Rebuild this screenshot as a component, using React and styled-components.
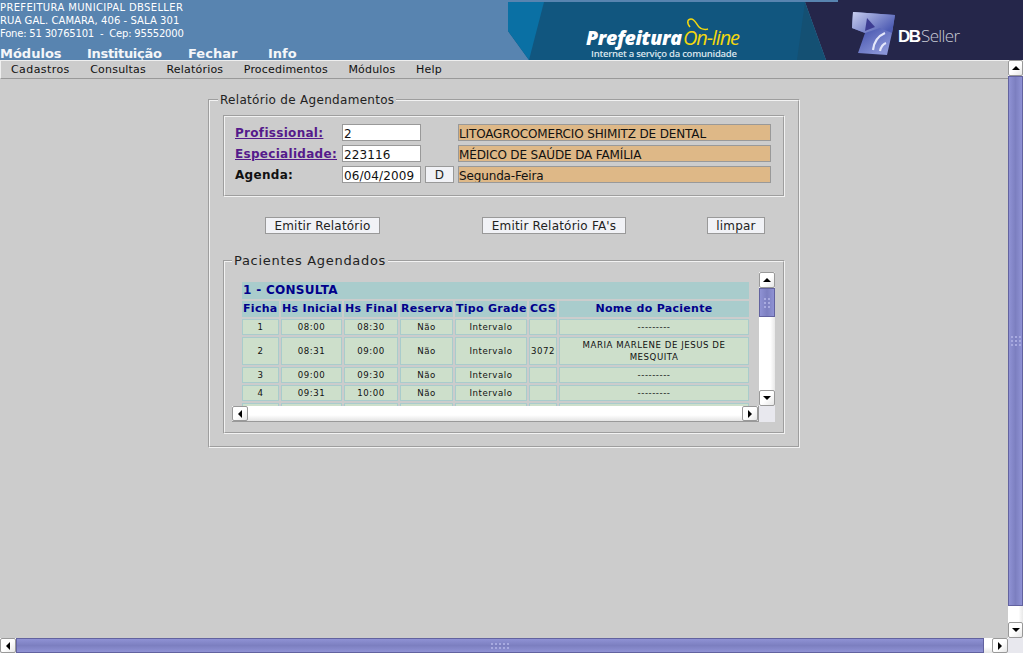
import styled, { createGlobalStyle } from "styled-components";

const GlobalStyle = createGlobalStyle`
  html, body { margin: 0; padding: 0; height: 100%; overflow: hidden; }
  body { background: #cccccc; font-family: "DejaVu Sans", Verdana, sans-serif; color: #000; }
`;

const MENU = ["Cadastros", "Consultas", "Relatórios", "Procedimentos", "Módulos", "Help"];
const NAV = ["Módulos", "Instituição", "Fechar", "Info"];
const COLS = [37, 61, 54, 53, 72, 28, 190];
const HEAD = ["Ficha", "Hs Inicial", "Hs Final", "Reserva", "Tipo Grade", "CGS", "Nome do Paciente"];
const ROWS = [
  ["1", "08:00", "08:30", "Não", "Intervalo", "", "---------"],
  ["2", "08:31", "09:00", "Não", "Intervalo", "3072", "MARIA MARLENE DE JESUS DE MESQUITA"],
  ["3", "09:00", "09:30", "Não", "Intervalo", "", "---------"],
  ["4", "09:31", "10:00", "Não", "Intervalo", "", "---------"],
  ["5", "", "", "", "", "", ""],
];

const Page = styled.div`
  height: 653px;
  width: 1023px;
  display: flex;
  flex-direction: column;
  overflow: hidden;
`;

const Header = styled.header`
  height: 60px;
  flex: none;
  background: #5884b0;
  display: flex;
  justify-content: space-between;
  overflow: hidden;
`;

const Brand = styled.div`
  color: #fff;
  padding-top: 1px;
`;

const AddressLine = styled.div`
  font-size: 10px;
  line-height: 13px;
  white-space: pre;
  letter-spacing: ${(p) => p.$spacing}px;
`;

const Nav = styled.nav`
  display: grid;
  grid-template-columns: 87px 101px 80px auto;
  margin-top: 6px;
  font-size: 13px;
  font-weight: 700;
  line-height: 16px;
  color: #f4f6f9;

  span:nth-child(2) {
    letter-spacing: -0.3px;
  }
`;

const Banner = styled.svg`
  width: 515px;
  height: 60px;
  flex: none;
  display: block;
`;

const Content = styled.div`
  flex: 1;
  display: flex;
  min-height: 0;
`;

const Main = styled.main`
  flex: 1;
  min-width: 0;
  display: flex;
  flex-direction: column;
`;

const MenuBar = styled.div`
  height: 17px;
  flex: none;
  display: flex;
  align-items: center;
  gap: 20.5px;
  padding-left: 10px;
  border-top: 1px solid #efefef;
  border-left: 1px solid #efefef;
  border-bottom: 1px solid #999;
  box-sizing: content-box;
  font-size: 11px;
  letter-spacing: 0.2px;
  color: #111;

  span:first-child {
    letter-spacing: 0.42px;
  }
`;

const Outer = styled.fieldset`
  margin: 14px 0 0 208px;
  padding: 0 13px;
  width: 592px;
  height: 355px;
  box-sizing: border-box;
  border: 2px groove #f2f2f2;
`;

const Legend = styled.legend`
  margin-left: ${(p) => p.$indent}px;
  padding: 0 2px;
  font-size: ${(p) => (p.$loose ? 13 : 12)}px;
  line-height: 14px;
  letter-spacing: ${(p) => (p.$loose ? 0.7 : 0.3)}px;
  color: #222;
`;

const FilterBox = styled.div`
  margin-top: 8px;
  width: 562px;
  height: 82px;
  box-sizing: border-box;
  padding: 7px 11px 0 10px;
  border: 2px groove #f2f2f2;
  display: grid;
  grid-template-columns: 107px 79px 4px 29px 4px 313px;
  grid-auto-rows: 17px;
  row-gap: 4px;
  align-items: center;
`;

const FieldLink = styled.a`
  font-size: 12px;
  font-weight: 700;
  letter-spacing: 0.3px;
  color: #551a8b;
  text-decoration: underline;
  white-space: nowrap;
`;

const FieldLabel = styled.span`
  font-size: 12px;
  font-weight: 700;
  letter-spacing: 0.3px;
  color: #111;
`;

const TextInput = styled.div`
  height: 17px;
  box-sizing: border-box;
  border: 1px solid #999;
  background: #fff;
  font-size: 12px;
  line-height: 16px;
  padding: 1px 0 0 1px;
  color: #111;
  letter-spacing: 0.1px;
  white-space: nowrap;
  overflow: hidden;
`;

const ReadOnlyInput = styled(TextInput)`
  grid-column: 6;
  background: #deb887;
  padding-left: 0;
  letter-spacing: -0.14px;
`;

const Button = styled.button`
  height: 17px;
  padding: 2px 0 0;
  width: ${(p) => p.$width}px;
  box-sizing: border-box;
  border: 1px solid #999;
  border-radius: 0;
  background: #f1f2f6;
  font-family: inherit;
  font-size: 12px;
  line-height: 13px;
  letter-spacing: 0.2px;
  color: #222;
`;

const DateButton = styled(Button)`
  grid-column: 4;
`;

const Actions = styled.div`
  margin: 20px 0 0 42px;
  display: flex;
`;

const ActionGap = styled.div`
  width: ${(p) => p.$width}px;
  flex: none;
`;

const ListBox = styled.fieldset`
  margin: 20px 0 0 0;
  padding: 0;
  width: 562px;
  height: 180px;
  box-sizing: border-box;
  border: 2px groove #f2f2f2;
`;

const Scroller = styled.div`
  margin: 4px 0 0 7px;
  width: 543px;
  height: 150px;
  display: grid;
  grid-template-columns: 527px 16px;
  grid-template-rows: 134px 16px;
`;

const Viewport = styled.div`
  overflow: hidden;
  padding: 10px 0 0 10px;
`;

const Grid = styled.table`
  border-collapse: separate;
  border-spacing: 2px;
  margin: -2px;
  table-layout: fixed;
  width: 511px;
`;

const SectionCell = styled.td`
  height: 17px;
  padding: 0 0 0 1px;
  background: #a9cccc;
  color: #00008b;
  font-size: 12px;
  font-weight: 700;
  letter-spacing: 0.3px;
  line-height: 17px;
`;

const HeadCell = styled.th`
  height: 16px;
  padding: 0;
  background: #a9cccc;
  color: #00008b;
  font-size: 11px;
  font-weight: 700;
  letter-spacing: 0.3px;
  line-height: 16px;
  white-space: nowrap;
  text-align: ${(p) => (p.$wide ? "center" : "left")};
  padding-left: ${(p) => (p.$wide ? 0 : 1)}px;
`;

const DataCell = styled.td`
  height: ${(p) => (p.$tall ? 26 : 14)}px;
  padding: 0 ${(p) => (p.$tight ? 0 : 8)}px;
  box-sizing: content-box;
  background: #cddfcb;
  border: 1px solid #a9cccc;
  color: #111;
  font-size: 8.6px;
  letter-spacing: 0.55px;
  line-height: 12px;
  text-align: center;
`;

const Track = styled.div`
  display: flex;
  flex-direction: ${(p) => (p.$vertical ? "column" : "row")};
  background: ${(p) =>
    p.$vertical
      ? "linear-gradient(90deg, #fff 70%, #e8e8e8)"
      : "linear-gradient(180deg, #fff 60%, #e4e4e4)"};
  box-sizing: border-box;
`;

const ArrowButton = styled.div`
  flex: none;
  width: ${(p) => p.$w}px;
  height: ${(p) => p.$h}px;
  box-sizing: border-box;
  display: flex;
  align-items: center;
  justify-content: center;
  background: linear-gradient(135deg, #fff 50%, #e6e6e6);
  border: 1px solid #999;
  border-radius: 2px;
`;

const Arrow = styled.span`
  width: 0;
  height: 0;
  border-style: solid;
  border-color: transparent;
  ${(p) => p.$dir === "up" && "border-width: 0 4px 4px 4px; border-bottom-color: #000;"}
  ${(p) => p.$dir === "down" && "border-width: 4px 4px 0 4px; border-top-color: #000;"}
  ${(p) => p.$dir === "left" && "border-width: 4px 4px 4px 0; border-right-color: #000;"}
  ${(p) => p.$dir === "right" && "border-width: 4px 0 4px 4px; border-left-color: #000;"}
`;

const Thumb = styled.div`
  flex: none;
  box-sizing: border-box;
  border: 1px solid #62629f;
  display: flex;
  align-items: center;
  justify-content: center;
  background: ${(p) =>
    p.$vertical
      ? "linear-gradient(90deg, #8f92d4, #7c7fc0 50%, #8f92d4)"
      : "linear-gradient(180deg, #8f92d4, #7c7fc0 50%, #8f92d4)"};
  ${(p) => (p.$vertical ? `height: ${p.$size}px;` : `width: ${p.$size}px;`)}
`;

const Grip = styled.div`
  display: grid;
  grid-template-columns: repeat(${(p) => p.$cols}, 2px);
  gap: 2px;
`;

const Dot = styled.i`
  width: 2px;
  height: 2px;
  background: #a8aae0;
`;

const Corner = styled.div`
  background: #e8e8ee;
`;

const TrackFill = styled.div`
  flex: 1;
`;

const ScrollBar = ({ vertical, size, cols, thickness, className }) => {
  const button = vertical ? { $w: thickness, $h: 16 } : { $w: 16, $h: thickness };
  const dots = Array.from({ length: cols * (vertical ? 3 : 2) });
  return (
    <Track $vertical={vertical} className={className}>
      <ArrowButton {...button}>
        <Arrow $dir={vertical ? "up" : "left"} />
      </ArrowButton>
      {size > 0 && (
        <Thumb $vertical={vertical} $size={size}>
          <Grip $cols={cols}>
            {dots.map((_, i) => (
              <Dot key={i} />
            ))}
          </Grip>
        </Thumb>
      )}
      <TrackFill />
      <ArrowButton {...button}>
        <Arrow $dir={vertical ? "down" : "right"} />
      </ArrowButton>
    </Track>
  );
};

const ListScrollX = styled(ScrollBar)`
  border: 1px solid #999;
  border-left: 0;
  border-top: 0;
`;

const PageScrollY = styled(ScrollBar)`
  width: 15px;
  flex: none;
`;

const BottomBar = styled.div`
  height: 15px;
  flex: none;
  display: grid;
  grid-template-columns: 1008px 15px;
`;

const BannerArt = () => (
  <Banner viewBox="0 0 515 60">
    <defs>
      <linearGradient id="dbBody" x1="0" y1="0" x2="0.6" y2="1">
        <stop offset="0" stopColor="#aab2e6" />
        <stop offset="0.45" stopColor="#4d5bb2" />
        <stop offset="1" stopColor="#8a95d8" />
      </linearGradient>
      <linearGradient id="dbTop" x1="0" y1="0" x2="1" y2="0.6">
        <stop offset="0" stopColor="#c9cff0" />
        <stop offset="1" stopColor="#4f5db4" />
      </linearGradient>
    </defs>
    <polygon points="0,2 330,2 330,0 515,0 515,60 0,60" fill="#5884b0" />
    <polygon points="0,2 297,2 297,60 21,60 0,31" fill="#11567f" />
    <polygon points="0,2 36,2 21,60 0,31" fill="#0a70a4" />
    <polygon points="297,2 330,2 330,0 515,0 515,60 318,60" fill="#25264a" />
    <polygon points="297,2 318,60 289,60" fill="#145073" />
    <text x="78" y="45" fontFamily="'Open Sans', sans-serif" fontWeight="800" fontStyle="italic" fontSize="19.5" fill="#fff" textLength="96">Prefeitura</text>
    <text x="175" y="45" fontFamily="'Open Sans', sans-serif" fontWeight="400" fontStyle="italic" fontSize="20" fill="#f3d80e" textLength="57">On-line</text>
    <path d="M182 27 C178 22 180 19 183 19 C187 19 188 24 191 27 C193 29 197 30 200 29" fill="none" stroke="#f3d80e" strokeWidth="1.5" />
    <text x="83" y="56.5" fontFamily="'Open Sans', sans-serif" fontSize="9.5" fontWeight="600" fill="#dbe6ee" textLength="146">Internet a serviço da comunidade</text>
    <polygon points="345,12 387,15 384,33 379,55 350,53 357,33 344,28" fill="url(#dbBody)" />
    <polygon points="345,12 387,15 384,33 372,28 357,33 344,28" fill="url(#dbTop)" />
    <polygon points="359,18 367,27 357,31" fill="#3d3d92" />
    <path d="M365 50 C366 42 370 36 377 33 M372 51 C373 47 375 44 378 43" fill="none" stroke="#e4e7fa" strokeWidth="2.2" />
    <text x="390" y="41.5" fontFamily="'Liberation Sans', sans-serif" fontWeight="700" fontSize="17" fill="#fff" textLength="23">DB</text>
    <text x="413" y="41.5" fontFamily="'Open Sans', sans-serif" fontWeight="300" fontSize="17" fill="#c9cbd6" textLength="39">Seller</text>
  </Banner>
);

export default function App() {
  return (
    <Page>
      <GlobalStyle />
      <Header>
        <Brand>
          <AddressLine $spacing={0.35}>PREFEITURA MUNICIPAL DBSELLER</AddressLine>
          <AddressLine $spacing={0.07}>RUA GAL. CAMARA, 406 - SALA 301</AddressLine>
          <AddressLine $spacing={-0.2}>{"Fone: 51 30765101  -  Cep: 95552000"}</AddressLine>
          <Nav>
            {NAV.map((n) => (
              <span key={n}>{n}</span>
            ))}
          </Nav>
        </Brand>
        <BannerArt />
      </Header>
      <Content>
        <Main>
          <MenuBar>
            {MENU.map((m) => (
              <span key={m}>{m}</span>
            ))}
          </MenuBar>
          <Outer>
            <Legend $indent={-5}>Relatório de Agendamentos</Legend>
            <FilterBox>
              <FieldLink href="#">Profissional:</FieldLink>
              <TextInput>2</TextInput>
              <ReadOnlyInput>LITOAGROCOMERCIO SHIMITZ DE DENTAL</ReadOnlyInput>
              <FieldLink href="#">Especialidade:</FieldLink>
              <TextInput>223116</TextInput>
              <ReadOnlyInput>MÉDICO DE SAÚDE DA FAMÍLIA</ReadOnlyInput>
              <FieldLabel>Agenda:</FieldLabel>
              <TextInput>06/04/2009</TextInput>
              <DateButton $width={29}>D</DateButton>
              <ReadOnlyInput>Segunda-Feira</ReadOnlyInput>
            </FilterBox>
            <Actions>
              <Button $width={115}>Emitir Relatório</Button>
              <ActionGap $width={102} />
              <Button $width={144}>Emitir Relatório FA's</Button>
              <ActionGap $width={81} />
              <Button $width={58}>limpar</Button>
            </Actions>
            <ListBox>
              <Legend $indent={7} $loose>Pacientes Agendados</Legend>
              <Scroller>
                <Viewport>
                  <Grid>
                    <colgroup>
                      {COLS.map((w, i) => (
                        <col key={i} width={w} />
                      ))}
                    </colgroup>
                    <tbody>
                      <tr>
                        <SectionCell colSpan={7}>1 - CONSULTA</SectionCell>
                      </tr>
                      <tr>
                        {HEAD.map((h, i) => (
                          <HeadCell key={h} $wide={i === 6}>{h}</HeadCell>
                        ))}
                      </tr>
                      {ROWS.map((row) => (
                        <tr key={row[0]}>
                          {row.map((c, i) => (
                            <DataCell key={i} $tall={row[0] === "2"} $tight={i < 6}>
                              {row[0] === "5" ? "" : c}
                            </DataCell>
                          ))}
                        </tr>
                      ))}
                    </tbody>
                  </Grid>
                </Viewport>
                <ScrollBar vertical size={29} cols={2} thickness={16} />
                <ListScrollX size={0} cols={0} thickness={15} />
                <Corner />
              </Scroller>
            </ListBox>
          </Outer>
        </Main>
        <PageScrollY vertical size={530} cols={3} thickness={15} />
      </Content>
      <BottomBar>
        <ScrollBar size={968} cols={5} thickness={15} />
        <Corner />
      </BottomBar>
    </Page>
  );
}
